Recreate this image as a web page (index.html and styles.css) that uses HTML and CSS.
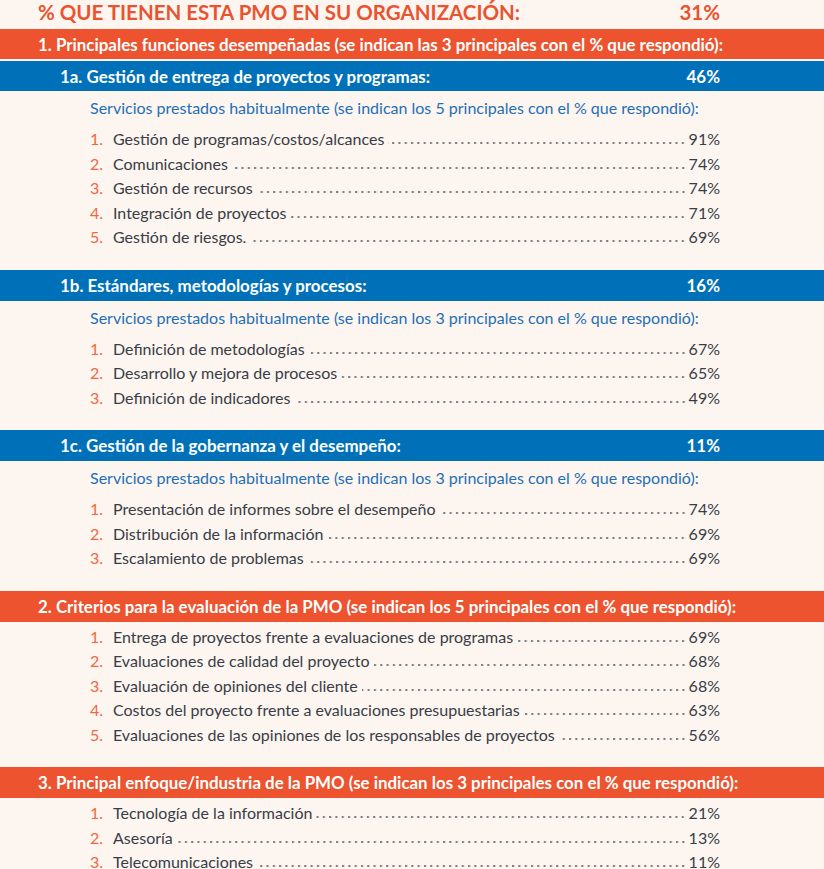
FILE: index.html
```html
<!DOCTYPE html>
<html lang="es">
<head>
    <meta charset="UTF-8">
    <meta name="viewport" content="width=device-width, initial-scale=1.0">
    <title>PMO</title>
    <link rel="stylesheet" href="styles.css">
</head>
<body>
    <div class="headline">
        <span>% QUE TIENEN ESTA PMO EN SU ORGANIZACIÓN:</span>
        <span>31%</span>
    </div>

    <div class="bar bar-orange bar-first">1. Principales funciones desempeñadas (se indican las 3 principales con el % que respondió):</div>

    <div class="bar bar-blue bar-tight">
        <span>1a. Gestión de entrega de proyectos y programas:</span>
        <span>46%</span>
    </div>
    <div class="section">
        <p class="services">Servicios prestados habitualmente (se indican los 5 principales con el % que respondió):</p>
        <ul class="rank">
            <li><span class="num">1.</span><span class="label">Gestión de programas/costos/alcances</span><span class="dots"></span><span class="pct">91%</span></li>
            <li><span class="num">2.</span><span class="label">Comunicaciones</span><span class="dots"></span><span class="pct">74%</span></li>
            <li><span class="num">3.</span><span class="label">Gestión de recursos</span><span class="dots"></span><span class="pct">74%</span></li>
            <li><span class="num">4.</span><span class="label">Integración de proyectos</span><span class="dots"></span><span class="pct">71%</span></li>
            <li><span class="num">5.</span><span class="label">Gestión de riesgos.</span><span class="dots"></span><span class="pct">69%</span></li>
        </ul>
    </div>

    <div class="bar bar-blue">
        <span>1b. Estándares, metodologías y procesos:</span>
        <span>16%</span>
    </div>
    <div class="section">
        <p class="services">Servicios prestados habitualmente (se indican los 3 principales con el % que respondió):</p>
        <ul class="rank">
            <li><span class="num">1.</span><span class="label">Definición de metodologías</span><span class="dots"></span><span class="pct">67%</span></li>
            <li><span class="num">2.</span><span class="label">Desarrollo y mejora de procesos</span><span class="dots"></span><span class="pct">65%</span></li>
            <li><span class="num">3.</span><span class="label">Definición de indicadores</span><span class="dots"></span><span class="pct">49%</span></li>
        </ul>
    </div>

    <div class="bar bar-blue">
        <span>1c. Gestión de la gobernanza y el desempeño:</span>
        <span>11%</span>
    </div>
    <div class="section">
        <p class="services">Servicios prestados habitualmente (se indican los 3 principales con el % que respondió):</p>
        <ul class="rank">
            <li><span class="num">1.</span><span class="label">Presentación de informes sobre el desempeño</span><span class="dots"></span><span class="pct">74%</span></li>
            <li><span class="num">2.</span><span class="label">Distribución de la información</span><span class="dots"></span><span class="pct">69%</span></li>
            <li><span class="num">3.</span><span class="label">Escalamiento de problemas</span><span class="dots"></span><span class="pct">69%</span></li>
        </ul>
    </div>

    <div class="bar bar-orange">2. Criterios para la evaluación de la PMO (se indican los 5 principales con el % que respondió):</div>
    <div class="section section-plain">
        <ul class="rank">
            <li><span class="num">1.</span><span class="label">Entrega de proyectos frente a evaluaciones de programas</span><span class="dots"></span><span class="pct">69%</span></li>
            <li><span class="num">2.</span><span class="label">Evaluaciones de calidad del proyecto</span><span class="dots"></span><span class="pct">68%</span></li>
            <li><span class="num">3.</span><span class="label">Evaluación de opiniones del cliente</span><span class="dots"></span><span class="pct">68%</span></li>
            <li><span class="num">4.</span><span class="label">Costos del proyecto frente a evaluaciones presupuestarias</span><span class="dots"></span><span class="pct">63%</span></li>
            <li><span class="num">5.</span><span class="label">Evaluaciones de las opiniones de los responsables de proyectos</span><span class="dots"></span><span class="pct">56%</span></li>
        </ul>
    </div>

    <div class="bar bar-orange">3. Principal enfoque/industria de la PMO (se indican los 3 principales con el % que respondió):</div>
    <div class="section section-plain">
        <ul class="rank">
            <li><span class="num">1.</span><span class="label">Tecnología de la información</span><span class="dots"></span><span class="pct">21%</span></li>
            <li><span class="num">2.</span><span class="label">Asesoría</span><span class="dots"></span><span class="pct">13%</span></li>
            <li><span class="num">3.</span><span class="label">Telecomunicaciones</span><span class="dots"></span><span class="pct">11%</span></li>
        </ul>
    </div>
</body>
</html>
```

FILE: styles.css
```css
* {
    margin: 0;
    padding: 0;
    box-sizing: border-box;
}

body {
    background-color: #fdf5f0;
    font-family: Lato, "Open Sans", sans-serif;
    color: #383d47;
}

.headline {
    display: flex;
    justify-content: space-between;
    align-items: center;
    height: 29px;
    padding: 0 104px 5px 38px;
    font-size: 20.5px;
    font-weight: 700;
    color: #e9532f;
}

.bar {
    display: flex;
    justify-content: space-between;
    align-items: center;
    height: 31px;
    margin-top: 20px;
    padding: 0 104px 0 38px;
    color: #ffffff;
    font-size: 16.9px;
    font-weight: 700;
    white-space: nowrap;
}

.bar-first {
    margin-top: 0;
    height: 30px;
}

.bar-tight {
    margin-top: 2px;
    height: 30px;
}

.bar-orange {
    background-color: #ec532e;
}

.bar-blue {
    background-color: #0071b9;
    padding-left: 60px;
}

.section {
    padding: 5px 104px 0 90px;
}

.section-plain {
    padding-top: 3px;
}

.services {
    line-height: 24px;
    margin-bottom: 7px;
    font-size: 16px;
    color: #1f6fb6;
}

.rank {
    list-style: none;
}

    .rank li {
        display: flex;
        align-items: baseline;
        line-height: 24.5px;
        font-size: 16px;
    }

    .rank .num {
        width: 23px;
        flex-shrink: 0;
        color: #f0673f;
    }

    .rank .dots {
        flex: 1;
        height: 4px;
        margin: 0 2px 0 4px;
        background-image: radial-gradient(circle at 3px 2px, #7c7f85 0.9px, transparent 1.3px);
        background-size: 6.3px 4px;
        background-repeat: repeat-x;
        background-position: right bottom;
    }

    .rank .pct {
        flex-shrink: 0;
    }
```
